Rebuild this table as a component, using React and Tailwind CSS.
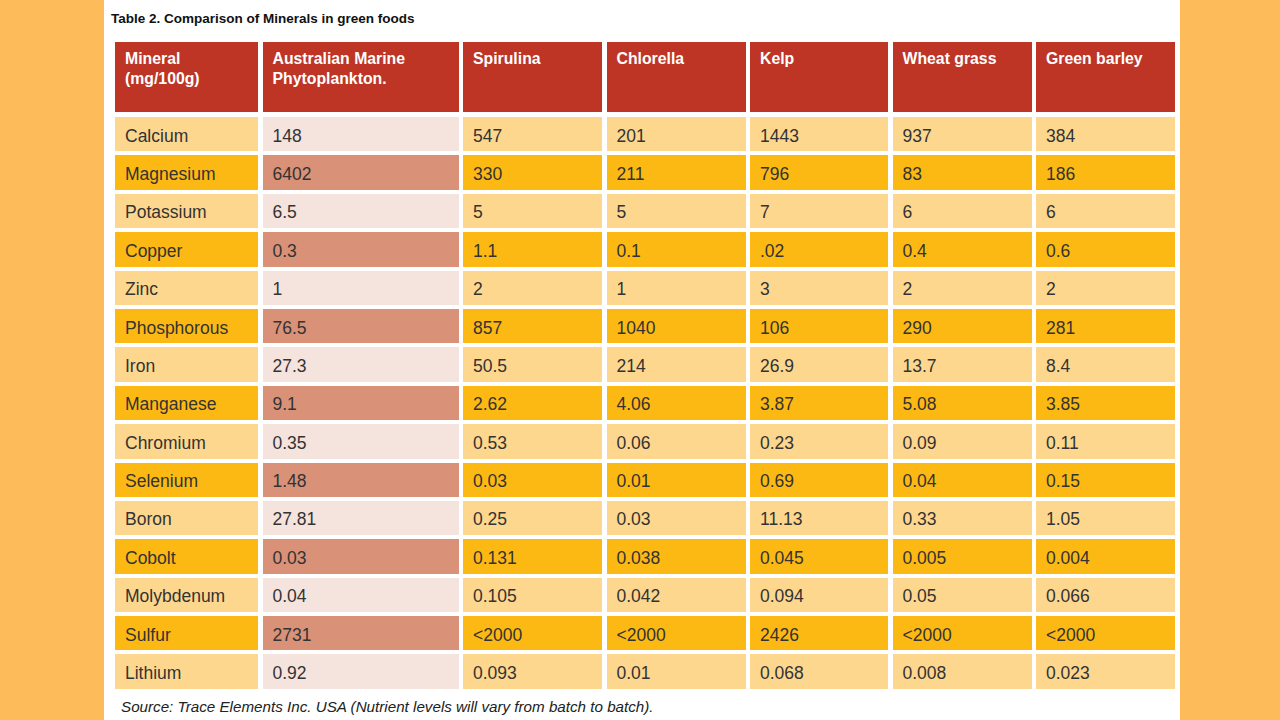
import React from "react";

const headers = [
	["Mineral", "(mg/100g)"],
	["Australian Marine", "Phytoplankton."],
	["Spirulina"],
	["Chlorella"],
	["Kelp"],
	["Wheat grass"],
	["Green barley"],
];

const rows = [
	["Calcium", "148", "547", "201", "1443", "937", "384"],
	["Magnesium", "6402", "330", "211", "796", "83", "186"],
	["Potassium", "6.5", "5", "5", "7", "6", "6"],
	["Copper", "0.3", "1.1", "0.1", ".02", "0.4", "0.6"],
	["Zinc", "1", "2", "1", "3", "2", "2"],
	["Phosphorous", "76.5", "857", "1040", "106", "290", "281"],
	["Iron", "27.3", "50.5", "214", "26.9", "13.7", "8.4"],
	["Manganese", "9.1", "2.62", "4.06", "3.87", "5.08", "3.85"],
	["Chromium", "0.35", "0.53", "0.06", "0.23", "0.09", "0.11"],
	["Selenium", "1.48", "0.03", "0.01", "0.69", "0.04", "0.15"],
	["Boron", "27.81", "0.25", "0.03", "11.13", "0.33", "1.05"],
	["Cobolt", "0.03", "0.131", "0.038", "0.045", "0.005", "0.004"],
	["Molybdenum", "0.04", "0.105", "0.042", "0.094", "0.05", "0.066"],
	["Sulfur", "2731", "<2000", "<2000", "2426", "<2000", "<2000"],
	["Lithium", "0.92", "0.093", "0.01", "0.068", "0.008", "0.023"],
];

function cellColor(rowIdx, colIdx) {
	const dark = rowIdx % 2 === 1;
	if (colIdx === 1) return dark ? "bg-[#d99178]" : "bg-[#f5e3dd]";
	return dark ? "bg-[#fdb913]" : "bg-[#fed78f]";
}

const App = () => {
	return (
		<div className="w-[1280px] h-[720px] bg-[#fdbb5a] overflow-hidden font-['Liberation_Sans',Arial,sans-serif]">
			<div className="ml-[104px] w-[1076px] h-[720px] bg-white pl-[11px]">
				<div className="pt-[9px] h-[42px] -ml-[4px] text-[13.5px] font-bold text-[#111]">
					Table 2. Comparison of Minerals in green foods
				</div>
				<div className="grid grid-cols-[143px_196px_139px_139px_138px_139px_139px] gap-x-[4.5px] gap-y-[4px]">
					{headers.map((h, i) => (
						<div
							key={i}
							className="h-[70px] bg-[#be3526] text-white font-bold text-[15.8px] leading-[20px] pl-[10px] pt-[7px] mb-[1px]"
						>
							{h.map((line, j) => (
								<div key={j}>{line}</div>
							))}
						</div>
					))}
					{rows.map((r, ri) =>
						r.map((v, ci) => (
							<div
								key={ri + "-" + ci}
								className={`h-[34.4px] flex items-center pl-[10px] pt-[3px] text-[17.5px] text-[#333] ${cellColor(ri, ci)}`}
							>
								{v}
							</div>
						))
					)}
				</div>
				<div className="pt-[7px] text-[15.2px] italic text-[#222] pl-[6px]">
					Source: Trace Elements Inc. USA (Nutrient levels will vary from batch to batch).
				</div>
			</div>
		</div>
	);
};

export default App;
